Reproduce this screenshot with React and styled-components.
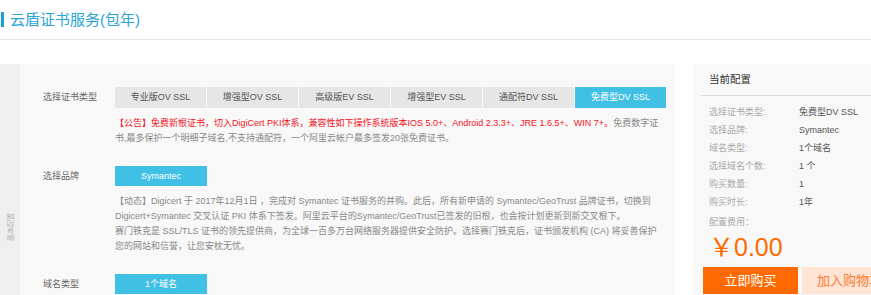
import styled, { createGlobalStyle } from 'styled-components';

const GlobalStyle = createGlobalStyle`
  body {
    margin: 0;
    background: #fff;
    font-family: "Liberation Sans", "Noto Sans CJK SC", sans-serif;
    overflow: hidden;
  }
`;

const Page = styled.div`
  width: 871px;
  height: 295px;
  overflow: hidden;
`;

const Header = styled.div`
  height: 40px;
  border-bottom: 1px solid #e6e6e6;
  display: flex;
  align-items: flex-start;
  padding-top: 12px;
  box-sizing: border-box;
`;

const TitleBar = styled.span`
  width: 3px;
  height: 15px;
  margin-left: 1px;
  background: #1a9fd0;
`;

const Title = styled.h1`
  margin: 0 0 0 6px;
  font-size: 15px;
  line-height: 15px;
  font-weight: normal;
  color: #2aa4d5;
`;

const Body = styled.div`
  display: flex;
  gap: 18px;
  margin-top: 24px;
`;

const MainPanel = styled.div`
  width: 675px;
  flex-shrink: 0;
  display: flex;
  background: #f8f8f8;
  min-height: 240px;
`;

const SideStrip = styled.div`
  width: 20px;
  background: #efefef;
  display: flex;
  justify-content: center;
  padding-top: 149px;
`;

const SideLabel = styled.span`
  writing-mode: vertical-rl;
  text-orientation: sideways;
  transform: rotate(180deg);
  font-size: 7px;
  color: #b5b5b5;
  height: 28px;
`;

const Content = styled.div`
  flex: 1;
  padding: 23px 0 0 23px;
`;

const Row = styled.div`
  display: flex;
  margin-top: ${({ gap }) => gap || 0}px;
`;

const Label = styled.div`
  width: 72px;
  flex-shrink: 0;
  font-size: 9px;
  line-height: ${({ h }) => h || 21}px;
  color: #666;
`;

const Field = styled.div`
  flex: 1;
`;

const Tabs = styled.div`
  display: flex;
  gap: 1px;
`;

const Tab = styled.div`
  width: 91px;
  height: 21px;
  line-height: 21px;
  text-align: center;
  font-size: 9px;
  background: ${({ active }) => (active ? '#41c0e6' : '#e6e6e6')};
  color: ${({ active }) => (active ? '#fff' : '#555')};
`;

const Pill = styled.div`
  width: 92px;
  height: 20px;
  line-height: 20px;
  text-align: center;
  font-size: 9px;
  background: #41c0e6;
  color: #fff;
`;

const Note = styled.p`
  margin: 8px 0 0;
  width: ${({ w }) => w || 552}px;
  font-size: 9px;
  line-height: 15px;
  color: #888;
`;

const Red = styled.span`
  color: #f4141e;
`;

const SidePanel = styled.div`
  width: 190px;
  flex-shrink: 0;
  background: #f8f8f8;
  padding-bottom: 10px;
`;

const PanelHead = styled.div`
  margin-left: 8px;
  padding-left: 8px;
  height: 31px;
  line-height: 31px;
  font-size: 10.5px;
  color: #333;
  border-bottom: 1px solid #dcdcdc;
`;

const InfoList = styled.div`
  padding: 7px 0 0 16px;
`;

const InfoRow = styled.div`
  display: flex;
  font-size: 9px;
  line-height: 18px;
`;

const InfoKey = styled.span`
  width: 90px;
  color: #aaa;
`;

const InfoVal = styled.span`
  color: #555;
`;

const CostLabel = styled.div`
  font-size: 9px;
  line-height: 20px;
  color: #aaa;
  margin-top: 1px;
`;

const Price = styled.div`
  font-size: 25px;
  line-height: 30px;
  color: #ff6a00;
  margin-left: 0;
`;

const Buttons = styled.div`
  display: flex;
  gap: 4px;
  margin: 5px 0 0 10px;
`;

const BuyBtn = styled.div`
  width: 95px;
  flex-shrink: 0;
  height: 27px;
  line-height: 27px;
  text-align: center;
  font-size: 13px;
  background: ${({ light }) => (light ? '#ffe3d5' : '#ff6a00')};
  color: ${({ light }) => (light ? '#ff7a30' : '#fff')};
`;

const tabs = ['专业版OV SSL', '增强型OV SSL', '高级版EV SSL', '增强型EV SSL', '通配符DV SSL', '免费型DV SSL'];

const info = [
  ['选择证书类型:', '免费型DV SSL'],
  ['选择品牌:', 'Symantec'],
  ['域名类型:', '1个域名'],
  ['选择域名个数:', '1 个'],
  ['购买数量:', '1'],
  ['购买时长:', '1年'],
];

export default function App() {
  return (
    <Page>
      <GlobalStyle />
      <Header>
        <TitleBar />
        <Title>云盾证书服务(包年)</Title>
      </Header>

      <Body>
        <MainPanel>
          <SideStrip>
            <SideLabel>基本配置</SideLabel>
          </SideStrip>
          <Content>
            <Row>
              <Label>选择证书类型</Label>
              <Field>
                <Tabs>
                  {tabs.map((t, i) => (
                    <Tab key={t} active={i === tabs.length - 1}>{t}</Tab>
                  ))}
                </Tabs>
                <Note>
                  <Red>【公告】免费新根证书，切入DigiCert PKI体系，兼容性如下操作系统版本IOS 5.0+、Android 2.3.3+、JRE 1.6.5+、WIN 7+。</Red>
                  免费数字证书,最多保护一个明细子域名,不支持通配符，一个阿里云帐户最多签发20张免费证书。
                </Note>
              </Field>
            </Row>

            <Row gap={20}>
              <Label h={20}>选择品牌</Label>
              <Field>
                <Pill>Symantec</Pill>
                <Note w={546}>
                  【动态】Digicert 于 2017年12月1日 ，完成对 Symantec 证书服务的并购。此后，所有新申请的 Symantec/GeoTrust 品牌证书，切换到 Digicert+Symantec 交叉认证 PKI 体系下签发。阿里云平台的Symantec/GeoTrust已签发的旧根，也会按计划更新到新交叉根下。
                  <br />
                  赛门铁克是 SSL/TLS 证书的领先提供商，为全球一百多万台网络服务器提供安全防护。选择赛门铁克后，证书颁发机构 (CA) 将妥善保护您的网站和信誉，让您安枕无忧。
                </Note>
              </Field>
            </Row>

            <Row gap={20}>
              <Label h={20}>域名类型</Label>
              <Field>
                <Pill>1个域名</Pill>
              </Field>
            </Row>
          </Content>
        </MainPanel>

        <SidePanel>
          <PanelHead>当前配置</PanelHead>
          <InfoList>
            {info.map(([k, v]) => (
              <InfoRow key={k}>
                <InfoKey>{k}</InfoKey>
                <InfoVal>{v}</InfoVal>
              </InfoRow>
            ))}
            <CostLabel>配置费用：</CostLabel>
            <Price>￥0.00</Price>
          </InfoList>
          <Buttons>
            <BuyBtn>立即购买</BuyBtn>
            <BuyBtn light>加入购物车</BuyBtn>
          </Buttons>
        </SidePanel>
      </Body>
    </Page>
  );
}
